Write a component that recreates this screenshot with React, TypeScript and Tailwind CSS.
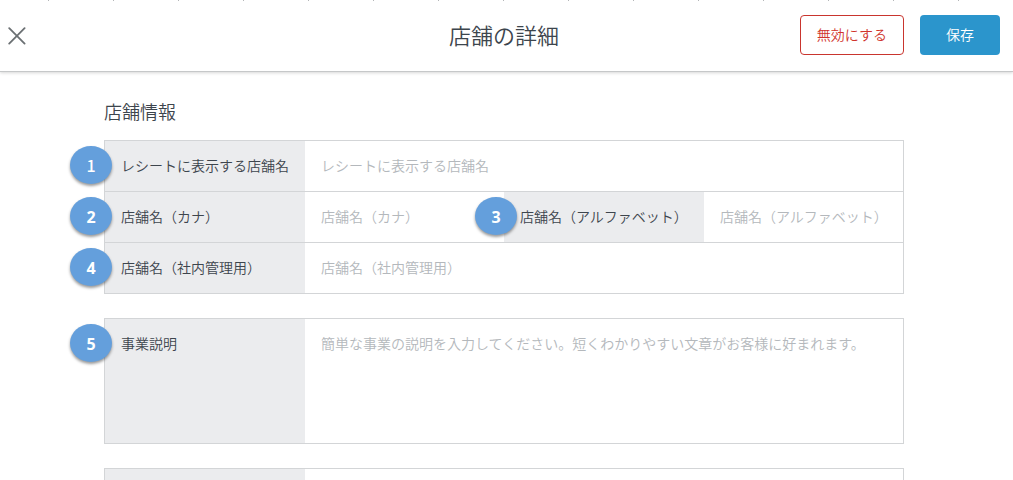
import type { ReactNode } from "react";

const ticks = Array.from({ length: 15 }, (_, i) => i);

function Badge({ n, inner = false }: { n: number; inner?: boolean }) {
  return (
    <span
      className={`absolute top-[5px] flex h-[38px] w-[42px] items-center justify-center rounded-[50%] bg-[#649fdc] text-base leading-5 text-white shadow-[0_2px_3px_rgba(0,0,0,0.4)] ${
        inner ? "-left-[29px]" : "-left-[35px]"
      } ${n === 1 ? "font-medium" : "pt-[2px] font-['Noto_Sans',sans-serif] font-bold"}`}
    >
      {n}
    </span>
  );
}

function Label({ id, n, inner, children }: { id: string; n: number; inner?: boolean; children: ReactNode }) {
  return (
    <label htmlFor={id} className="relative bg-[#ebecee] px-4 pt-[14px] pb-4 leading-5 whitespace-nowrap text-[#3d454d]">
      {children}
      <Badge n={n} inner={inner} />
    </label>
  );
}

function TextField({ id, placeholder }: { id: string; placeholder: string }) {
  return (
    <input
      id={id}
      type="text"
      placeholder={placeholder}
      className="h-[50px] w-full min-w-0 bg-white px-4 pt-[14px] pb-4 leading-5 outline-none placeholder:text-[#b4b8bc]"
    />
  );
}

export default function App() {
  return (
    <div className="h-screen overflow-hidden bg-white font-['Noto_Sans_CJK_JP',sans-serif] text-sm font-[350] text-[#3d454d]">
      <header className="border-b border-[#c6c8c9] shadow-[0_1px_3px_rgba(0,0,0,0.16)]">
        <div aria-hidden="true" className="flex h-px overflow-hidden pl-12">
          {ticks.map((i) => (
            <span key={i} className="w-[65px] shrink-0 border-l border-[#b5b7b9]" />
          ))}
        </div>
        <div className="grid h-[70px] grid-cols-[1fr_auto_1fr] items-center pr-[13px] pb-[2px] pl-2">
          <button type="button" aria-label="閉じる" className="justify-self-start">
            <svg width="18" height="20" viewBox="0 0 18 20" fill="none" stroke="#6b7073" strokeWidth="1.8" strokeLinecap="round">
              <path d="M1.2 3.2 16.6 18.6M16.6 3.2 1.2 18.6" />
            </svg>
          </button>
          <h1 className="pb-[2px] text-[22px] leading-8">店舗の詳細</h1>
          <div className="flex gap-4 justify-self-end leading-5">
            <button type="button" className="h-10 rounded border border-[#c9352e] px-4 pb-[2px] text-[#d0342c]">
              無効にする
            </button>
            <button type="button" className="h-10 w-20 rounded bg-[#2b95cc] pb-[2px] text-white">
              保存
            </button>
          </div>
        </div>
      </header>

      <main className="pr-[5px]">
        <form className="mx-auto flex max-w-[800px] flex-col gap-6 pt-[25px]">
          <section>
            <h2 className="mb-[15px] text-lg leading-7">店舗情報</h2>
            <div className="divide-y divide-[#d3d5d7] border border-[#d3d5d7]">
              <div className="grid grid-cols-[200px_1fr]">
                <Label id="receipt" n={1}>レシートに表示する店舗名</Label>
                <TextField id="receipt" placeholder="レシートに表示する店舗名" />
              </div>
              <div className="grid grid-cols-[200px_1fr_200px_1fr]">
                <Label id="kana" n={2}>店舗名（カナ）</Label>
                <TextField id="kana" placeholder="店舗名（カナ）" />
                <Label id="alphabet" n={3} inner>店舗名（アルファベット）</Label>
                <TextField id="alphabet" placeholder="店舗名（アルファベット）" />
              </div>
              <div className="grid grid-cols-[200px_1fr]">
                <Label id="internal" n={4}>店舗名（社内管理用）</Label>
                <TextField id="internal" placeholder="店舗名（社内管理用）" />
              </div>
            </div>
          </section>

          <section className="grid grid-cols-[200px_1fr] border border-[#d3d5d7]">
            <Label id="description" n={5}>事業説明</Label>
            <textarea
              id="description"
              placeholder="簡単な事業の説明を入力してください。短くわかりやすい文章がお客様に好まれます。"
              className="h-[124px] w-full resize-none bg-white px-4 pt-[14px] pb-4 leading-5 outline-none placeholder:text-[#b4b8bc]"
            />
          </section>

          <section className="grid grid-cols-[200px_1fr] border border-[#d3d5d7]">
            <div className="h-[50px] bg-[#ebecee]" />
          </section>
        </form>
      </main>
    </div>
  );
}
